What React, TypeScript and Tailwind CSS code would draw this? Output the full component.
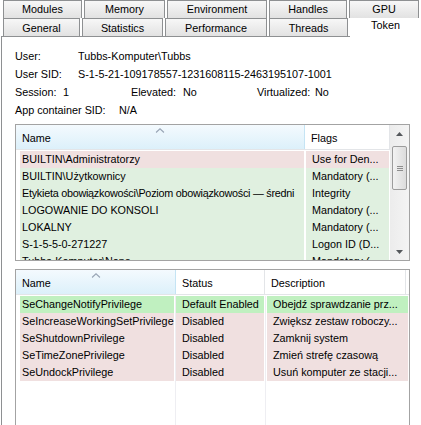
import React from 'react'

// Tab strip: two rows, second row sits on the panel, Token is the selected tab
const TAB_ROW_1 = [
  { label: 'Modules', w: 'w-[79px]' },
  { label: 'Memory', w: 'w-[81px]' },
  { label: 'Environment', w: 'w-[100px]' },
  { label: 'Handles', w: 'w-[78px]' },
  { label: 'GPU', w: 'w-[70px]' },
]

const TAB_ROW_2 = [
  { label: 'General', w: 'w-[77px]' },
  { label: 'Statistics', w: 'w-[81px]' },
  { label: 'Performance', w: 'w-[102px]' },
  { label: 'Threads', w: 'w-[79px]' },
]

const GREEN_GROUP = 'bg-[#e0f0e0]'
const PINK = 'bg-[#f0e0e0]'
const GREEN_PRIV = 'bg-[#c0f0c0]'

const GROUPS = [
  { name: 'BUILTIN\\Administratorzy', flags: 'Use for Den...', bg: PINK },
  { name: 'BUILTIN\\Użytkownicy', flags: 'Mandatory (...', bg: GREEN_GROUP },
  { name: 'Etykieta obowiązkowości\\Poziom obowiązkowości — średni', flags: 'Integrity', bg: GREEN_GROUP, tight: true },
  { name: 'LOGOWANIE DO KONSOLI', flags: 'Mandatory (...', bg: GREEN_GROUP },
  { name: 'LOKALNY', flags: 'Mandatory (...', bg: GREEN_GROUP },
  { name: 'S-1-5-5-0-271227', flags: 'Logon ID (D...', bg: GREEN_GROUP },
  { name: 'Tubbs-Komputer\\None', flags: 'Mandatory (...', bg: GREEN_GROUP },
]

const PRIVILEGES = [
  { name: 'SeChangeNotifyPrivilege', status: 'Default Enabled', desc: 'Obejdź sprawdzanie prz...', bg: GREEN_PRIV },
  { name: 'SeIncreaseWorkingSetPrivilege', status: 'Disabled', desc: 'Zwiększ zestaw roboczy...', bg: PINK },
  { name: 'SeShutdownPrivilege', status: 'Disabled', desc: 'Zamknij system', bg: PINK },
  { name: 'SeTimeZonePrivilege', status: 'Disabled', desc: 'Zmień strefę czasową', bg: PINK },
  { name: 'SeUndockPrivilege', status: 'Disabled', desc: 'Usuń komputer ze stacji...', bg: PINK },
]

function SortArrow() {
  return (
    <svg width="9" height="5" viewBox="0 0 9 5" className="absolute left-1/2 top-[3px] -translate-x-1/2">
      <polyline points="0.5,4.5 4.5,0.8 8.5,4.5" fill="none" stroke="#9aa6b6" strokeWidth="1.2" />
    </svg>
  )
}

function SortedHeader({ w, label }: { w: string; label: string }) {
  return (
    <div className={`relative ${w} h-[24px] shrink-0 border-r border-[#c5e4f4] bg-linear-to-b from-[#f4fafe] to-[#dcf0fa] pl-[6px] leading-[26px]`}>
      <SortArrow />
      {label}
    </div>
  )
}

function Header({ w, label }: { w: string; label: string }) {
  return (
    <div className={`${w} h-[24px] shrink-0 border-r border-[#e3e5e8] bg-white pl-[6px] leading-[26px]`}>
      {label}
    </div>
  )
}

function Scrollbar() {
  return (
    <div className="flex w-[19px] shrink-0 flex-col bg-linear-to-r from-[#ececec] to-[#f4f4f4] px-[2px]">
      <div className="flex h-[17px] items-center justify-center">
        <svg width="7" height="4" viewBox="0 0 7 4">
          <polygon points="0,4 3.5,0 7,4" fill="#55585c" />
        </svg>
      </div>
      <div className="mt-[4px] flex h-[44px] items-center justify-center rounded-[2px] border border-[#9c9c9c] bg-linear-to-r from-[#f2f2f2] to-[#dcdcdc]">
        <div className="flex flex-col gap-[1px]">
          <div className="h-px w-[6px] bg-[#8d8d8d]" />
          <div className="h-px w-[6px] bg-[#8d8d8d]" />
          <div className="h-px w-[6px] bg-[#8d8d8d]" />
        </div>
      </div>
      <div className="flex-1" />
      <div className="flex h-[17px] items-center justify-center">
        <svg width="7" height="4" viewBox="0 0 7 4">
          <polygon points="0,0 3.5,4 7,0" fill="#55585c" />
        </svg>
      </div>
    </div>
  )
}

function GroupsList() {
  return (
    <div className="flex h-[137px] w-[395px] overflow-hidden border border-[#a3a3a3] bg-white">
      <div className="flex w-[374px] shrink-0 flex-col">
        <div className="flex border-b border-[#e3e5e8]">
          <SortedHeader w="w-[289px]" label="Name" />
          <Header w="w-[85px]" label="Flags" />
        </div>
        <div className="flex flex-col pt-[1px]">
          {GROUPS.map((g) => (
            <div key={g.name} className="flex h-[17px] shrink-0 leading-[17px]">
              <div className="w-[4px] shrink-0" />
              <div className={`w-[284px] shrink-0 overflow-hidden whitespace-nowrap pl-[2px] ${g.bg} ${g.tight ? 'tracking-[-0.25px]' : ''}`}>
                {g.name}
              </div>
              <div className="w-[2px] shrink-0" />
              <div className={`w-[83px] shrink-0 overflow-hidden whitespace-nowrap pl-[6px] ${g.bg}`}>{g.flags}</div>
            </div>
          ))}
        </div>
      </div>
      <Scrollbar />
    </div>
  )
}

function PrivilegesList() {
  return (
    <div className="flex w-[395px] flex-1 flex-col overflow-hidden border border-b-0 border-[#a3a3a3] bg-white">
      <div className="flex border-b border-[#e3e5e8]">
        <SortedHeader w="w-[160px]" label="Name" />
        <Header w="w-[89px]" label="Status" />
        <Header w="w-[141px]" label="Description" />
      </div>
      <div className="flex flex-1 pt-[1px]">
        <div className="flex w-[160px] shrink-0 flex-col border-r border-[#eeeef2] pl-[4px] pr-px">
          {PRIVILEGES.map((p) => (
            <div key={p.name} className={`h-[17px] whitespace-nowrap pl-[2px] leading-[17px] ${p.bg}`}>{p.name}</div>
          ))}
        </div>
        <div className="flex w-[90px] shrink-0 flex-col border-r border-[#eeeef2] pr-px">
          {PRIVILEGES.map((p) => (
            <div key={p.name} className={`h-[17px] whitespace-nowrap pl-[6px] leading-[17px] ${p.bg}`}>{p.status}</div>
          ))}
        </div>
        <div className="flex w-[142px] shrink-0 flex-col pl-px">
          {PRIVILEGES.map((p) => (
            <div key={p.name} className={`h-[17px] whitespace-nowrap pl-[6px] leading-[17px] ${p.bg}`}>{p.desc}</div>
          ))}
        </div>
      </div>
    </div>
  )
}

export default function App() {
  return (
    <div className="h-[425px] w-[421px] overflow-hidden bg-white font-['Liberation_Sans',Arial,sans-serif] text-[10.8px] text-black">
      {/* Tabs */}
      <div className="flex h-[18px] gap-[2px] pl-[3px]">
        {TAB_ROW_1.map((t) => (
          <div
            key={t.label}
            className={`${t.w} border border-b-0 border-[#8e9092] bg-linear-to-b from-[#f7f7f7] to-[#e2e2e2] text-center leading-[17px] ${t.label === 'GPU' ? 'border-b' : ''}`}
          >
            {t.label}
          </div>
        ))}
      </div>
      <div className="relative z-10 flex h-[18px] gap-[2px] pl-[3px]">
        {TAB_ROW_2.map((t) => (
          <div
            key={t.label}
            className={`${t.w} h-[18px] border border-b-0 border-[#8e9092] bg-linear-to-b from-[#f7f7f7] to-[#e2e2e2] text-center leading-[19px]`}
          >
            {t.label}
          </div>
        ))}
        <div className="h-[19px] flex-1 bg-white text-center leading-[15px]">Token</div>
      </div>

      {/* Panel */}
      <div className="ml-px flex h-[389px] flex-col border-l border-t border-[#8e9092] pl-[13px] pt-[10px]">
        <div className="flex h-[18px] items-center">
          <span className="w-[63px]">User:</span>
          <span>Tubbs-Komputer\Tubbs</span>
        </div>
        <div className="flex h-[18px] items-center">
          <span className="w-[63px]">User SID:</span>
          <span>S-1-5-21-109178557-1231608115-2463195107-1001</span>
        </div>
        <div className="flex h-[18px] items-center">
          <span className="w-[48px]">Session:</span>
          <span className="w-[68px]">1</span>
          <span className="w-[52px]">Elevated:</span>
          <span className="w-[74px]">No</span>
          <span className="w-[56px] whitespace-nowrap">Virtualized:</span>
          <span className="ml-[2px]">No</span>
        </div>
        <div className="flex h-[18px] items-center">
          <span className="w-[104px]">App container SID:</span>
          <span>N/A</span>
        </div>
        <div className="mt-[5px]">
          <GroupsList />
        </div>
        <div className="mt-[8px] flex flex-1 flex-col">
          <PrivilegesList />
        </div>
      </div>
    </div>
  )
}
